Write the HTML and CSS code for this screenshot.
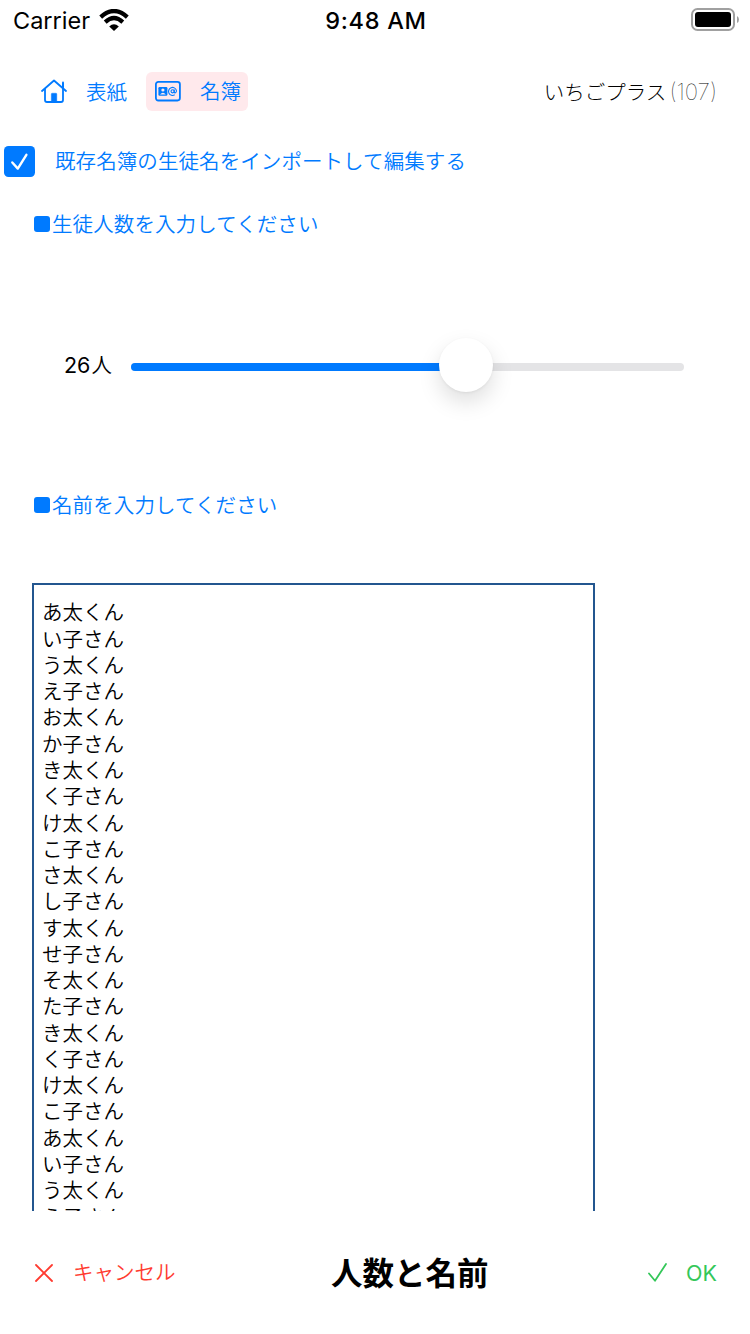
FILE: index.html
```html
<!DOCTYPE html>
<html lang="ja">
<head>
<meta charset="utf-8">
<title>人数と名前</title>
<link rel="stylesheet" href="styles.css">
</head>
<body>
<div class="screen">
  <header class="status">
    <div class="carrier"><span>Carrier</span>
      <svg class="wifi" width="30" height="22" viewBox="0 0 30 22" fill="none" stroke="#000" stroke-width="4.2"><path d="M1.7 8.1Q15-4.1 28.3 8.1"/><path d="M6.2 13.1Q15 5 23.8 13.1"/><path d="M10.2 17.4Q15 13.2 19.8 17.4L15 21.9Z" fill="#000" stroke="none"/></svg>
    </div>
    <span class="time">9:48 AM</span>
    <svg class="battery" width="48" height="23" viewBox="0 0 48 23"><rect x="1" y="1" width="42" height="21" rx="5.5" fill="none" stroke="#a0a0a0" stroke-width="2"/><rect x="4" y="4" width="36" height="15" rx="3" fill="#000"/><path d="M46 8Q48 9 48 11.5T46 15Z" fill="#a0a0a0"/></svg>
  </header>
  <nav class="nav">
    <div class="tab home">
      <svg width="26" height="24" viewBox="0 0 26 24" fill="none" stroke="#007aff" stroke-width="1.8" stroke-linejoin="round" stroke-linecap="round"><path d="M1 12L13 1.5L25 12"/><path d="M4 10V21Q4 23 6 23H20Q22 23 22 21V10"/><path d="M22 3.5V8.5" stroke-width="2"/><path d="M10.3 23V15Q10.3 14.2 11.2 14.2H15Q15.8 14.2 15.8 15V23Z" fill="#007aff" stroke-width=".4"/></svg>
      <span>表紙</span>
    </div>
    <div class="tab active">
      <svg width="26" height="21" viewBox="0 0 26 21" fill="none" stroke="#007aff"><rect x=".9" y=".9" width="24" height="18.6" rx="2.4" stroke-width="1.8"/><rect x="3.4" y="6" width="9" height="8.8" rx="1.2" fill="#007aff" stroke="none"/><circle cx="7.9" cy="9" r="1.6" fill="#ffe9ec" stroke="none"/><path d="M5 13.5Q7.9 9.8 10.8 13.5Z" fill="#ffe9ec" stroke="none"/><circle cx="17.6" cy="10.3" r="1.6" stroke-width="1.1"/><path d="M19.2 8.5V11Q19.5 12.2 20.5 11.8Q21.7 11.2 21.4 9.4A4 4 0 1 0 19.7 13.8" stroke-width="1.1"/></svg>
      <span>名簿</span>
    </div>
    <div class="edition">いちごプラス<span class="count">(107)</span></div>
  </nav>
  <label class="import">
    <svg width="31" height="31" viewBox="0 0 31 31"><rect width="31" height="31" rx="4.5" fill="#007aff"/><path d="M8.3 16.5L13.8 22.6L22.4 8.8" fill="none" stroke="#fff" stroke-width="2.4" stroke-linecap="round" stroke-linejoin="round"/></svg>
    <span>既存名簿の生徒名をインポートして編集する</span>
  </label>
  <h2 class="heading"><i class="square"></i><span>生徒人数を入力してください</span></h2>
  <div class="slider-row">
    <span class="amount"><span class="digits">26</span>人</span>
    <div class="track"><div class="fill"></div><div class="thumb"></div></div>
  </div>
  <h2 class="heading names-heading"><i class="square"></i><span>名前を入力してください</span></h2>
  <div class="names">あ太くん
い子さん
う太くん
え子さん
お太くん
か子さん
き太くん
く子さん
け太くん
こ子さん
さ太くん
し子さん
す太くん
せ子さん
そ太くん
た子さん
き太くん
く子さん
け太くん
こ子さん
あ太くん
い子さん
う太くん
え子さん</div>
  <footer class="footer">
    <div class="cancel"><svg width="18" height="18" viewBox="0 0 18 18" fill="none" stroke="#ff3b30" stroke-width="1.8" stroke-linecap="round"><path d="M1 1L17 17M17 1L1 17"/></svg><span>キャンセル</span></div>
    <h1 class="title">人数と名前</h1>
    <div class="ok"><svg width="19" height="19" viewBox="0 0 19 19" fill="none" stroke="#34c759" stroke-width="1.8" stroke-linecap="round" stroke-linejoin="round"><path d="M1 10.5L7 17.8L18 1"/></svg><span>OK</span></div>
  </footer>
</div>
</body>
</html>
```
FILE: styles.css
```css
* { box-sizing: border-box; }
body { margin: 0; background: #fff; }
.screen {
  width: 750px; height: 1334px; overflow: hidden;
  display: flex; flex-direction: column;
  font-family: Inter, "Noto Sans CJK JP DemiLight", "Noto Sans CJK JP", sans-serif;
  font-size: 20.5px; font-weight: 350; line-height: 30px;
  color: #000; white-space: nowrap;
}
.status {
  height: 40px; flex: none; padding: 1px 11px 0 13px;
  display: grid; grid-template-columns: 1fr auto 1fr; align-items: center;
  font-size: 23.5px; font-weight: 400;
}
.carrier { display: flex; align-items: center; gap: 9px; }
.time { font-weight: 500; letter-spacing: .7px; }
.battery { justify-self: end; margin-bottom: 2px; }
.wifi { margin: 0 0 1px; }
.nav { height: 39px; flex: none; margin-top: 32px; padding: 0 33px 0 41px; display: flex; align-items: center; color: #007aff; }
.tab { display: flex; align-items: center; gap: 19px; }
.home span { padding-top: 2px; }
.home svg { margin-bottom: 1px; }
.active { height: 39px; width: 102px; margin-left: 19px; padding-left: 9px; border-radius: 6px; background: #ffe9ec; }
.edition { margin-left: auto; padding-top: 2px; color: #000; font-family: Inter, "Noto Sans CJK JP", sans-serif; font-weight: 300; }
.count { font-weight: 100; font-size: 22.5px; margin-left: 3px; }
.import { flex: none; height: 31px; margin: 35px 0 0 4px; display: flex; align-items: center; gap: 20px; color: #007aff; letter-spacing: .08px; }
.import span { padding-top: 1px; }
.heading { flex: none; height: 30px; margin: 32px 0 0 34px; display: flex; align-items: center; gap: 2px; font-size: inherit; font-weight: inherit; color: #007aff; letter-spacing: .1px; }
.heading span { padding-top: 2px; }
.square { width: 16px; height: 16px; border-radius: 3px; background: #007aff; }
.slider-row { flex: none; height: 54px; margin: 99px 66px 0 64px; display: flex; align-items: center; }
.amount { width: 67px; padding-top: 1px; }
.digits { font-size: 21.5px; font-weight: 400; margin-right: 1px; }
.track { position: relative; flex: 1; height: 8px; margin-top: 4px; border-radius: 4px; background: #e4e4e6; }
.fill { width: 335px; height: 8px; border-radius: 4px; background: #007aff; }
.thumb { position: absolute; left: 308px; top: -25px; width: 54px; height: 54px; border-radius: 50%; background: #fff; box-shadow: 0 10px 22px rgba(0,0,0,.13), 0 1px 3px rgba(0,0,0,.06); }
.names-heading { margin-top: 98px; }
.names-heading span { padding-top: 1px; }
.names {
  flex: none; width: 563px; height: 628px; margin: 63px 0 0 32px; padding: 15.4px 9px 0 8px;
  overflow: hidden; border: 2px solid #23568f; border-bottom: 0;
  white-space: pre; line-height: 26.27px; color: #000;
}
.footer { flex: 1; padding: 0 33px 0 35px; display: flex; align-items: center; }
.cancel, .ok { display: flex; align-items: center; gap: 20px; }
.cancel { width: 296px; color: #ff3b30; }
.ok svg { margin-left: -1px; }
.ok { margin-left: auto; gap: 19px; color: #34c759; }
.ok span { font-size: 21.5px; font-weight: 400; }
.title { margin: 0 0 4px; font-family: "Noto Sans CJK JP", sans-serif; font-size: 31.5px; font-weight: 600; line-height: 44px; }
```
